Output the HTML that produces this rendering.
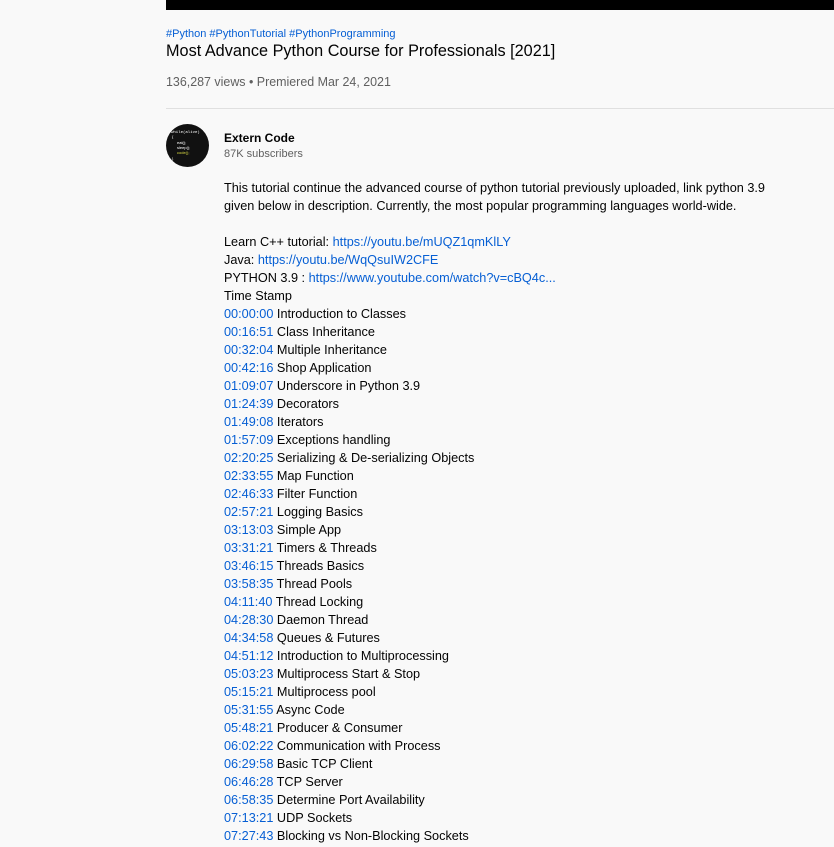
<!DOCTYPE html>
<html><head><meta charset="utf-8"><style>
body{margin:0;background:#f9f9f9;font-family:"Liberation Sans",Arial,sans-serif;width:834px;height:847px;overflow:hidden;position:relative;color:#030303}
.bar{position:absolute;left:166px;top:0;width:668px;height:10px;background:#000}
.tags{position:absolute;left:166px;top:28px;font-size:11px;color:#065fd4}
.title{position:absolute;left:166px;top:42px;font-size:16.25px;color:#030303}
.views{position:absolute;left:166px;top:75px;font-size:12.45px;color:#606060}
.hr{position:absolute;left:166px;top:108px;width:668px;height:1px;background:#e0e0e0}
.av{position:absolute;left:166px;top:124px;width:43px;height:43px;border-radius:50%;background:#111;overflow:hidden}
.name{position:absolute;left:224px;top:131px;font-size:12px;font-weight:bold}
.subs{position:absolute;left:224px;top:148px;font-size:11px;color:#606060}
.desc{position:absolute;left:224px;top:179px;font-size:12.7px;line-height:18px;width:600px;white-space:pre}
a{color:#065fd4;text-decoration:none}
</style></head><body>
<div class="bar"></div>
<div class="tags">#Python #PythonTutorial #PythonProgramming</div>
<div class="title">Most Advance Python Course for Professionals [2021]</div>
<div class="views">136,287 views • Premiered Mar 24, 2021</div>
<div class="hr"></div>
<div class="av"><svg width="43" height="43"><text x="5" y="9" font-size="4" fill="#fff" font-family="Liberation Mono">while(alive)</text><text x="6" y="14" font-size="4" fill="#fff">{</text><text x="11" y="20" font-size="4" fill="#fff">eat();</text><text x="11" y="25" font-size="4" fill="#fff">sleep();</text><text x="11" y="30" font-size="4" fill="#dd4">code();</text><text x="6" y="36" font-size="4" fill="#fff">}</text></svg></div>
<div class="name">Extern Code</div>
<div class="subs">87K subscribers</div>
<div class="desc">This tutorial continue the advanced course of python tutorial previously uploaded, link python 3.9
given below in description. Currently, the most popular programming languages world-wide.

Learn C++ tutorial: <a>https://youtu.be/mUQZ1qmKlLY</a>
Java: <a>https://youtu.be/WqQsuIW2CFE</a>
PYTHON 3.9 : <a>https://www.youtube.com/watch?v=cBQ4c...</a>
Time Stamp
<a>00:00:00</a> Introduction to Classes
<a>00:16:51</a> Class Inheritance
<a>00:32:04</a> Multiple Inheritance
<a>00:42:16</a> Shop Application
<a>01:09:07</a> Underscore in Python 3.9
<a>01:24:39</a> Decorators
<a>01:49:08</a> Iterators
<a>01:57:09</a> Exceptions handling
<a>02:20:25</a> Serializing &amp; De-serializing Objects
<a>02:33:55</a> Map Function
<a>02:46:33</a> Filter Function
<a>02:57:21</a> Logging Basics
<a>03:13:03</a> Simple App
<a>03:31:21</a> Timers &amp; Threads
<a>03:46:15</a> Threads Basics
<a>03:58:35</a> Thread Pools
<a>04:11:40</a> Thread Locking
<a>04:28:30</a> Daemon Thread
<a>04:34:58</a> Queues &amp; Futures
<a>04:51:12</a> Introduction to Multiprocessing
<a>05:03:23</a> Multiprocess Start &amp; Stop
<a>05:15:21</a> Multiprocess pool
<a>05:31:55</a> Async Code
<a>05:48:21</a> Producer &amp; Consumer
<a>06:02:22</a> Communication with Process
<a>06:29:58</a> Basic TCP Client
<a>06:46:28</a> TCP Server
<a>06:58:35</a> Determine Port Availability
<a>07:13:21</a> UDP Sockets
<a>07:27:43</a> Blocking vs Non-Blocking Sockets</div>
</body></html>
